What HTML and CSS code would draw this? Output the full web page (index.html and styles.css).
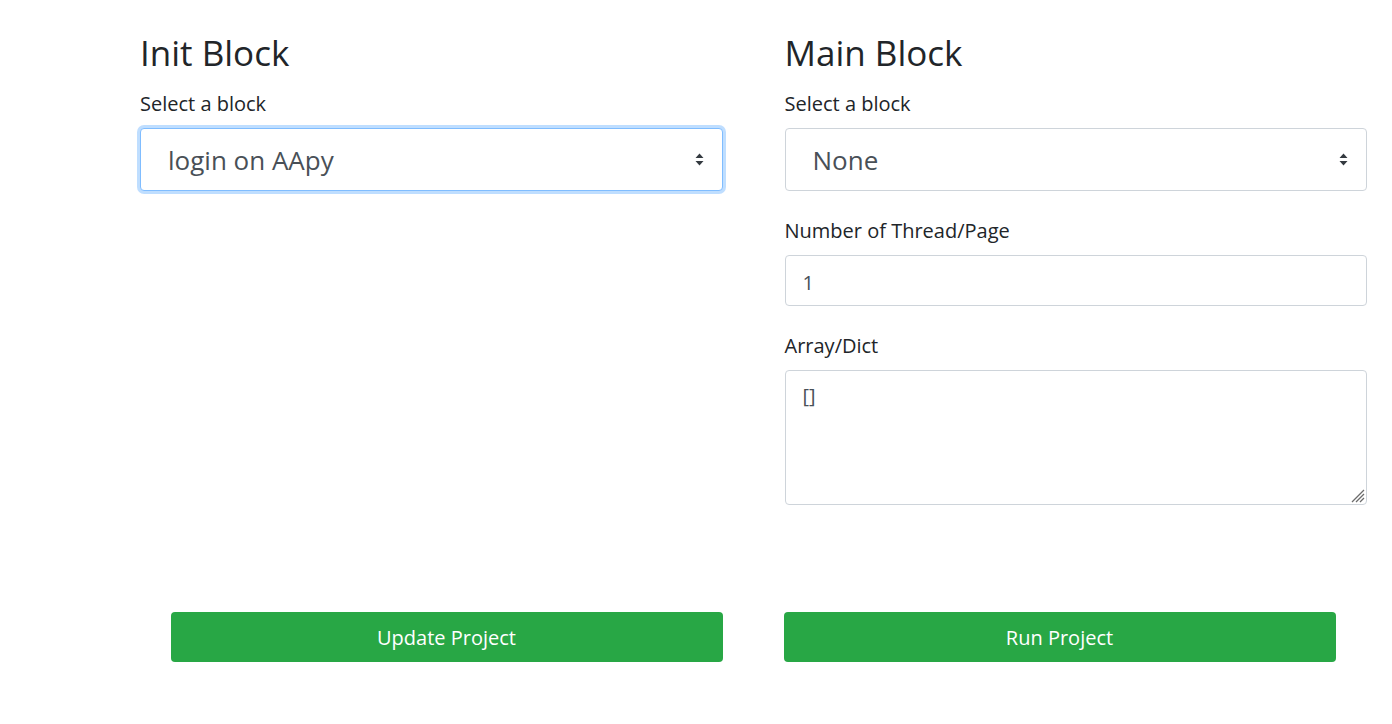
FILE: index.html
```html
<!DOCTYPE html>
<html lang="en">
<head>
<meta charset="utf-8">
<title>Project Blocks</title>
<link rel="stylesheet" href="styles.css">
</head>
<body>
<main class="page">
  <section class="col">
    <h1 class="title">Init Block</h1>
    <div class="group">
      <label class="label" for="init-select">Select a block</label>
      <div class="select-wrap">
        <select id="init-select" class="select select-focus">
          <option>login on AApy</option>
        </select>
        <svg class="caret" width="9" height="13" viewBox="0 0 9 13"><path d="M4.5 0.5 L8.5 5 H0.5 Z M4.5 12.5 L8.5 8 H0.5 Z" fill="#343a40"/></svg>
      </div>
    </div>
  </section>
  <section class="col">
    <h1 class="title">Main Block</h1>
    <div class="group">
      <label class="label" for="main-select">Select a block</label>
      <div class="select-wrap">
        <select id="main-select" class="select">
          <option>None</option>
        </select>
        <svg class="caret" width="9" height="13" viewBox="0 0 9 13"><path d="M4.5 0.5 L8.5 5 H0.5 Z M4.5 12.5 L8.5 8 H0.5 Z" fill="#343a40"/></svg>
      </div>
    </div>
    <div class="group">
      <label class="label" for="threads">Number of Thread/Page</label>
      <input id="threads" class="input" type="text" value="1">
    </div>
    <div class="group">
      <label class="label" for="dict">Array/Dict</label>
      <div class="textarea-wrap">
        <textarea id="dict" class="textarea">[]</textarea>
        <svg class="grip" width="16" height="16" viewBox="0 0 16 16"><path d="M15 3 L3 15 M15 7 L7 15 M15 11 L11 15" stroke="#6c6c6c" stroke-width="1.3" fill="none"/></svg>
      </div>
    </div>
  </section>
  <div class="actions">
    <button class="btn btn-left" type="button">Update Project</button>
    <button class="btn btn-right" type="button">Run Project</button>
  </div>
</main>
</body>
</html>
```
FILE: styles.css
```css
* { box-sizing: border-box; }
html, body { margin: 0; padding: 0; background: #fff; }
body {
  font-family: "Open Sans", "Noto Sans", sans-serif;
  color: #212529;
  font-size: 20px;
}
.page {
  display: grid;
  grid-template-columns: 1fr 1fr;
  column-gap: 62px;
  padding: 31px 25px 0 140px;
  align-items: start;
}
.col { display: flex; flex-direction: column; }
.title {
  margin: 0 0 14px 0;
  font-weight: 400;
  font-size: 35px;
  line-height: 44px;
}
.group { display: flex; flex-direction: column; margin-bottom: 25px; }
.label {
  font-size: 20px;
  line-height: 30px;
  margin-bottom: 9px;
}
.select-wrap { position: relative; }
.select {
  width: 100%;
  height: 63px;
  appearance: none;
  -webkit-appearance: none;
  border: 1px solid #ced4da;
  border-radius: 4px;
  background: #fff;
  color: #495057;
  font-family: inherit;
  font-size: 26px;
  padding: 0 40px 0 27px;
  outline: none;
}
.select-focus {
  border-color: #80bdff;
  box-shadow: 0 0 0 3px rgba(0,123,255,.25);
}
.caret { position: absolute; right: 19px; top: 25px; }
.input {
  height: 51px;
  border: 1px solid #ced4da;
  border-radius: 4px;
  padding: 3px 17px 0;
  font-family: inherit;
  font-size: 20px;
  color: #495057;
}
.textarea-wrap { position: relative; display: flex; }
.textarea {
  width: 100%;
  height: 135px;
  border: 1px solid #ced4da;
  border-radius: 4px;
  padding: 10px 17px;
  font-family: inherit;
  font-size: 20px;
  line-height: 30px;
  color: #495057;
  resize: none;
}
.grip { position: absolute; right: 2px; bottom: 2px; pointer-events: none; }
.actions {
  grid-column: 1 / 3;
  display: grid;
  grid-template-columns: 1fr 1fr;
  column-gap: 62px;
  margin-top: 82px;
}
.btn {
  width: 552px;
  height: 50px;
  border: 0;
  border-radius: 4px;
  background: #28a745;
  color: #fff;
  font-family: inherit;
  font-size: 20px;
}
.btn-left { justify-self: end; }
.btn-right { justify-self: start; margin-left: -1px; }
```
